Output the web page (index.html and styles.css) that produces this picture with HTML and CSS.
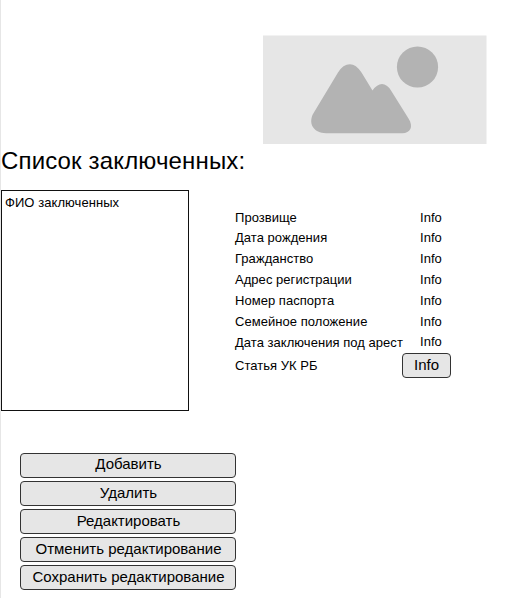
FILE: index.html
```html
<!DOCTYPE html>
<html lang="ru">
<head>
<meta charset="utf-8">
<title>Список заключенных</title>
<link rel="stylesheet" href="styles.css">
</head>
<body>
<main class="page">
  <svg class="photo" viewBox="0 0 224 109" aria-hidden="true">
    <rect y="0.500" width="223.500" height="108.500" fill="#e6e6e6"/>
    <circle cx="154.500" cy="32" r="20.6" fill="#b3b3b3"/>
    <path d="M50 79 L75 37.500 Q80 29.200 87 29.200 Q93 29.200 98.500 37.500 L109.500 55.500 Q114 49 119 49 Q124 49 128 55.500 L145.500 83.500 C151 92 147 98.200 139.500 98.200 H63 C51 98.200 45 89 50 79Z" fill="#b3b3b3"/>
  </svg>
  <h1 class="title"><span>Список заключенных:</span></h1>
  <div class="content">
    <div class="list"><span>ФИО заключенных</span></div>
    <dl class="details">
      <div class="row"><dt>Прозвище</dt><dd>Info</dd></div>
      <div class="row"><dt>Дата рождения</dt><dd>Info</dd></div>
      <div class="row"><dt>Гражданство</dt><dd>Info</dd></div>
      <div class="row"><dt>Адрес регистрации</dt><dd>Info</dd></div>
      <div class="row"><dt>Номер паспорта</dt><dd>Info</dd></div>
      <div class="row"><dt>Семейное положение</dt><dd>Info</dd></div>
      <div class="row arrest"><dt>Дата заключения под арест</dt><dd>Info</dd></div>
      <div class="row article"><dt>Статья УК РБ</dt><dd><button class="btn">Info</button></dd></div>
    </dl>
  </div>
  <div class="actions">
    <button class="btn">Добавить</button>
    <button class="btn">Удалить</button>
    <button class="btn">Редактировать</button>
    <button class="btn">Отменить редактирование</button>
    <button class="btn">Сохранить редактирование</button>
  </div>
</main>
</body>
</html>
```
FILE: styles.css
```css
* { box-sizing: border-box; }
body {
  margin: 0;
  background: #fff;
  color: #000;
  font-family: "Liberation Sans", Arial, sans-serif;
  font-size: 13px;
}
.page {
  height: 598px;
  padding-top: 35px;
  border-left: 1px solid #e6e6e6;
  overflow: hidden;
}
.photo {
  display: block;
  width: 224px;
  height: 109px;
  margin-left: 262px;
}
.title {
  height: 46px;
  margin: 0;
  font-size: 24px;
  font-weight: 400;
  letter-spacing: 0.15px;
  line-height: 34px;
  white-space: nowrap;
}
.content { display: flex; height: 221px; }
.list {
  width: 188px;
  height: 221px;
  padding: 4px 3px;
  border: 1px solid #111;
  line-height: 15px;
  letter-spacing: 0.06px;
}
.details { margin: 17px 0 0 46px; }
.row {
  display: grid;
  grid-template-columns: 185px 50px;
  height: 21px;
  line-height: 21px;
  letter-spacing: 0.04px;
  white-space: nowrap;
}
.row:first-child { height: 20px; }
.row dd { margin: 0; }
.arrest dd { line-height: 19px; }
.article { grid-template-columns: 167px 50px; line-height: 26px; }
.btn {
  height: 25px;
  padding: 0 0 2px;
  border: 1px solid #333;
  border-radius: 4px;
  background: #e6e6e6;
  color: #000;
  font-family: inherit;
  font-size: 15px;
  line-height: 20px;
}
.article .btn { display: block; width: 49px; }
.actions {
  display: flex;
  flex-direction: column;
  gap: 3px;
  width: 216px;
  margin: 42px 0 0 19px;
}
.actions .btn { padding-left: 1px; }
.actions .btn:first-child { padding-bottom: 3px; }
```
